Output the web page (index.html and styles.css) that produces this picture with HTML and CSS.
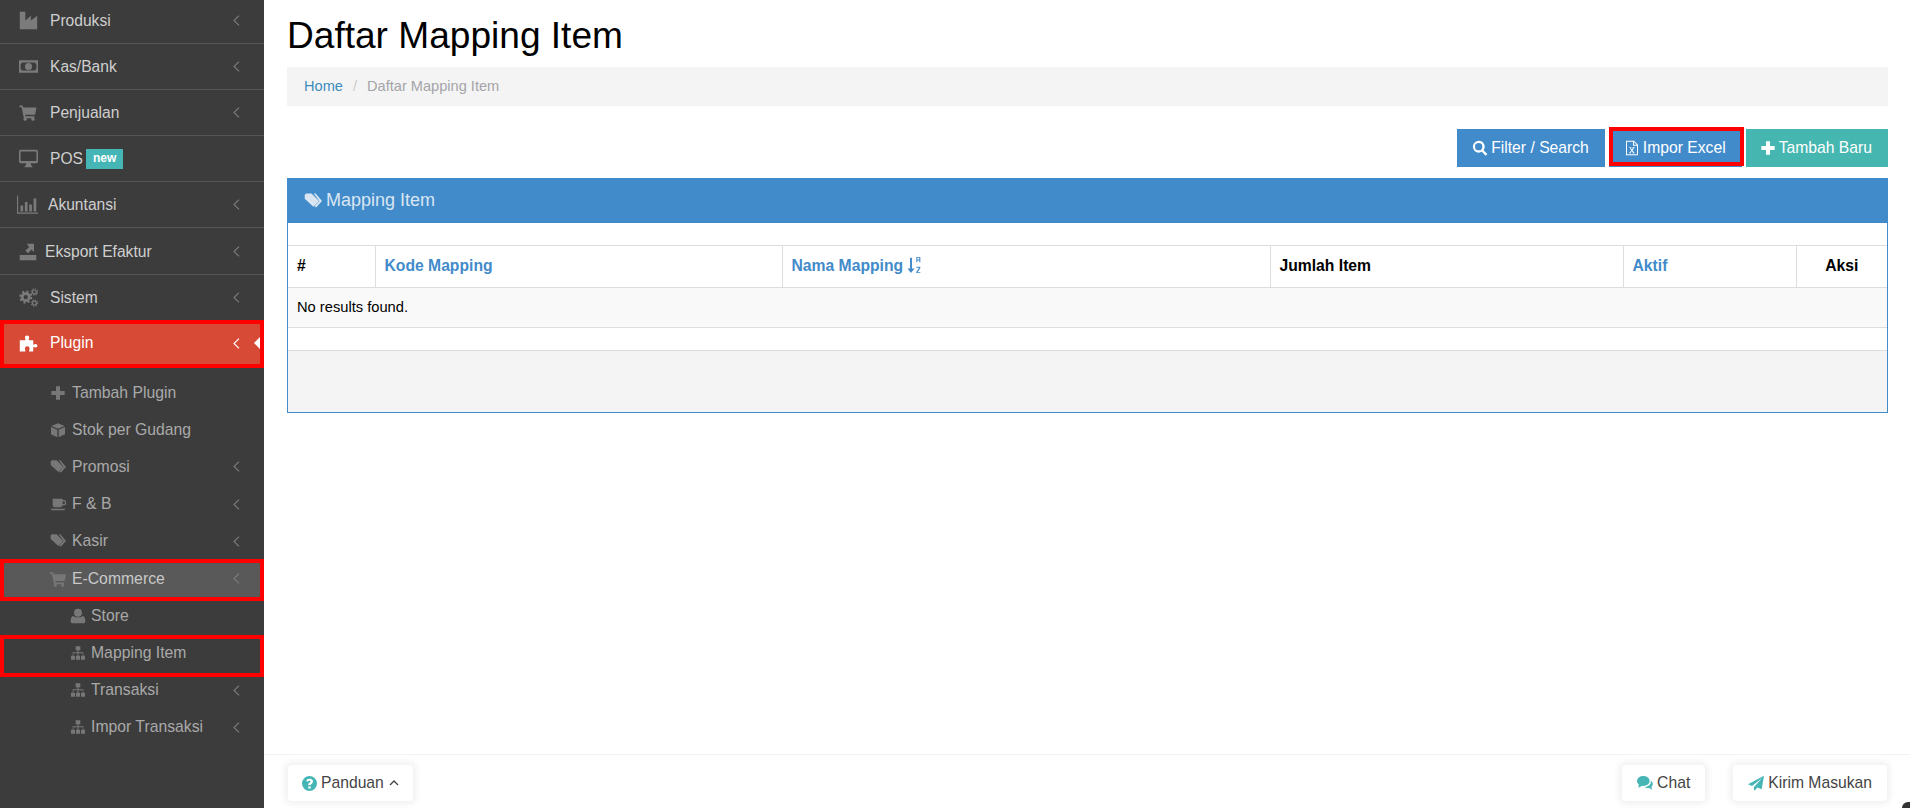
FILE: index.html
```html
<!DOCTYPE html>
<html lang="id">
<head>
<meta charset="utf-8">
<title>Daftar Mapping Item</title>
<link rel="stylesheet" href="styles.css">
</head>
<body>
<svg class="sprite" aria-hidden="true">
  <symbol id="i-industry" viewBox="0 0 24 24"><path d="M1 1h7v11l7-6v6l8-6v17H1z"/></symbol>
  <symbol id="i-money" viewBox="0 0 24 24"><path fill-rule="evenodd" d="M0 4h24v16H0zM4 7 2 9v6l2 2h16l2-2V9l-2-2z"/><circle cx="12" cy="12" r="4.5"/></symbol>
  <symbol id="i-cart" viewBox="0 0 24 24"><path d="M0 2h4.5l.8 3H24l-2 10H8l.5 2.2H21V20H6.2L3 4.500H0z"/><circle cx="8" cy="21.500" r="2.300"/><circle cx="19" cy="21.500" r="2.300"/></symbol>
  <symbol id="i-desktop" viewBox="0 0 24 24"><path fill-rule="evenodd" d="M1.500 1h21l1.500 1.500v14L22.500 18H15v2l2 2v1H7v-1l2-2v-2H1.500L0 16.500v-14zM2 3v12h20V3z"/></symbol>
  <symbol id="i-chart" viewBox="0 0 24 24"><path d="M0 2h1.300v19H24v1.500H0zM4 13h3v7H4zM9 9h3v11H9zM14 12h3v8h-3zM19 5h3v15h-3z"/></symbol>
  <symbol id="i-export" viewBox="0 0 24 24"><path d="M1 16h22v7H1zM20 1v11l-3.500-3.500-4.500 5-3.500-3.500 5-4.500L10.500 1z"/></symbol>
  <symbol id="i-cogs" viewBox="0 0 24 24"><g fill="none" stroke="currentColor"><circle cx="8.500" cy="11.500" r="4.500" stroke-width="3.500"/><circle cx="8.500" cy="11.500" r="7" stroke-width="2.500" stroke-dasharray="2.700 2.800"/><circle cx="19.500" cy="5" r="2.500" stroke-width="1.500"/><circle cx="19.500" cy="5" r="4" stroke-width="1.300" stroke-dasharray="1.500 1.640"/><circle cx="19.500" cy="19" r="2.500" stroke-width="1.500"/><circle cx="19.500" cy="19" r="4" stroke-width="1.300" stroke-dasharray="1.500 1.640"/></g></symbol>
  <symbol id="i-puzzle" viewBox="0 0 24 24"><path d="M1 8h6.500C9 7 7.500 6 7.500 4.500a2.700 2.700 0 0 1 5.400 0c0 1.500-1.500 2.500 0 3.500H18v5c1 1.200 1.500-.4 3-.4a2.300 2.300 0 0 1 0 4.600c-1.500 0-2-1.600-3-.4V22h-5c-1-1 .4-2 .4-3.400a3 3 0 0 0-6 0c0 1.400 1.400 2.400.4 3.400H1z"/></symbol>
  <symbol id="i-plus" viewBox="0 0 24 24"><path d="M9 2h6v7h7v6h-7v7H9v-7H2V9h7z"/></symbol>
  <symbol id="i-cube" viewBox="0 0 24 24"><path d="M12 2 22 6 12 10 2 6zM1.500 7.500 11 11.500V23L1.500 18.500zM22.500 7.500V18.500L13 23V11.500z"/></symbol>
  <symbol id="i-tags" viewBox="0 0 24 24"><path d="M1 3.500 3 2h7l10 10-7.500 7.500L1 9z"/><path d="M13 2h2.500L24 12l-8 8.500-2-2 6.500-6.500z"/></symbol>
  <symbol id="i-coffee" viewBox="0 0 24 24"><path fill-rule="evenodd" d="M4 4h15v2h1.500a3.500 3.500 0 0 1 0 8H19c-.5 2-2 3-4 3H8c-2.500 0-4-1.500-4-4zM19 8v4h1.500a2 2 0 0 0 0-4z"/><path d="M1 19h22l-1.500 2.500h-19z"/></symbol>
  <symbol id="i-user" viewBox="0 0 24 24"><circle cx="12" cy="7" r="6"/><path d="M5 12c2 2.500 12 2.500 14 0 3 .5 4 4 4 7.500 0 2-1 3.500-3 3.500H4c-2 0-3-1.500-3-3.500C1 16 2 12.500 5 12z"/></symbol>
  <symbol id="i-sitemap" viewBox="0 0 24 24"><path d="M8.500 2h7v6h-2.700v3H20v5h2.500v6h-6v-6H19v-3.500h-6.200V16H15v6H9v-6h2.200v-3.500H5V16h2.500v6h-6v-6H4v-5h7.200V8H8.500z"/></symbol>
  <symbol id="i-search" viewBox="0 0 24 24"><path fill-rule="evenodd" d="M10 1a9 9 0 0 1 7.300 14.300L23 21l-2.500 2.500-5.700-5.700A9 9 0 1 1 10 1zm0 3.500a5.500 5.500 0 1 0 0 11 5.500 5.500 0 0 0 0-11z"/></symbol>
  <symbol id="i-excel" viewBox="0 0 24 24"><path fill-rule="evenodd" d="M3 1h12l6 6v16H3zm1.500 1.500v19h15V8.500H13.500v-6zM15 3v4h4z"/><path d="M8 11h3v1h-.8l1.600 2.300L13.500 12h-.8v-1H16v1h-.8l-2.400 3.200L15.500 19h.5v1h-3.200v-1h.8l-1.800-2.600L9.700 19h.8v1H7.500v-1h.7l2.700-3.600L8.700 12H8z"/></symbol>
  <symbol id="i-question" viewBox="0 0 24 24"><path fill-rule="evenodd" d="M12 0a12 12 0 1 1 0 24 12 12 0 0 1 0-24zM12 4.500c-2.500 0-4.200 1.200-5.200 3l2.300 1.700c.6-.9 1.400-1.600 2.700-1.600 1 0 1.800.5 1.800 1.300 0 1.800-3.600 1.700-3.600 5v1h3.800c0-2.200 3.800-2.300 3.800-6 0-2.900-2.600-4.400-4.600-4.400zM10 16.700v3.300h4v-3.300z"/></symbol>
  <symbol id="i-send" viewBox="0 0 24 24"><path d="M24 1 20.500 21.500 14 18.800 10.500 23l-1.500-.2V18L21 5 6 16.500 0 14z"/></symbol>
  <symbol id="i-comments" viewBox="0 0 24 24"><ellipse cx="9.500" cy="9" rx="9.500" ry="7.500"/><path d="M3 13 2 19l6-3z"/><path d="M20.500 8.500C24 10 25 15 21.500 18l1.500 4-5-2.500c-2.500.5-5 0-7-1.500 5 0 11-3.500 9.500-9.500z"/></symbol>
  <symbol id="i-chev" viewBox="0 0 7 11"><path d="M6 .7 1 5.500l5 4.800" fill="none" stroke="currentColor" stroke-width="1.100"/></symbol>
  <symbol id="i-sort" viewBox="0 0 16 20"><path d="M3 2h2.200v12H8l-3.900 5L.2 14H3z"/><path d="M10 1h4.500v6H13.300V5h-2.100v2H10zM11.200 2v2h2.100V2zM10 12h4.500v1.200L11.500 18h3v1H10v-1.200L13 13h-3z"/></symbol>
</svg>

<div class="app">
  <aside class="sidebar">
    <ul class="nav">
      <li class="top"><svg class="ic ic-19"><use href="#i-industry"/></svg><span class="label">Produksi</span><svg class="chev"><use href="#i-chev"/></svg></li>
      <li class="top"><svg class="ic ic-19"><use href="#i-money"/></svg><span class="label">Kas/Bank</span><svg class="chev"><use href="#i-chev"/></svg></li>
      <li class="top"><svg class="ic ic-cart"><use href="#i-cart"/></svg><span class="label">Penjualan</span><svg class="chev"><use href="#i-chev"/></svg></li>
      <li class="top"><svg class="ic ic-19"><use href="#i-desktop"/></svg><span class="label">POS</span><span class="badge">new</span></li>
      <li class="top tight"><svg class="ic ic-21"><use href="#i-chart"/></svg><span class="label">Akuntansi</span><svg class="chev"><use href="#i-chev"/></svg></li>
      <li class="top tall"><svg class="ic ic-18"><use href="#i-export"/></svg><span class="label">Eksport Efaktur</span><svg class="chev"><use href="#i-chev"/></svg></li>
      <li class="top"><svg class="ic ic-19"><use href="#i-cogs"/></svg><span class="label">Sistem</span><svg class="chev"><use href="#i-chev"/></svg></li>
      <li class="top active"><svg class="ic ic-19"><use href="#i-puzzle"/></svg><span class="label">Plugin</span><svg class="chev"><use href="#i-chev"/></svg><span class="notch"></span><span class="mark mark-plugin"></span></li>
    </ul>
    <ul class="sub">
      <li class="lvl2"><svg class="ic"><use href="#i-plus"/></svg><span class="label">Tambah Plugin</span></li>
      <li class="lvl2"><svg class="ic"><use href="#i-cube"/></svg><span class="label">Stok per Gudang</span></li>
      <li class="lvl2"><svg class="ic"><use href="#i-tags"/></svg><span class="label">Promosi</span><svg class="chev"><use href="#i-chev"/></svg></li>
      <li class="lvl2"><svg class="ic"><use href="#i-coffee"/></svg><span class="label">F &amp; B</span><svg class="chev"><use href="#i-chev"/></svg></li>
      <li class="lvl2"><svg class="ic"><use href="#i-tags"/></svg><span class="label">Kasir</span><svg class="chev"><use href="#i-chev"/></svg></li>
      <li class="lvl2 current"><svg class="ic"><use href="#i-cart"/></svg><span class="label">E-Commerce</span><svg class="chev"><use href="#i-chev"/></svg><span class="mark mark-ecom"></span></li>
      <li class="lvl3"><svg class="ic"><use href="#i-user"/></svg><span class="label">Store</span></li>
      <li class="lvl3"><svg class="ic"><use href="#i-sitemap"/></svg><span class="label">Mapping Item</span><span class="mark mark-map"></span></li>
      <li class="lvl3"><svg class="ic"><use href="#i-sitemap"/></svg><span class="label">Transaksi</span><svg class="chev"><use href="#i-chev"/></svg></li>
      <li class="lvl3"><svg class="ic"><use href="#i-sitemap"/></svg><span class="label">Impor Transaksi</span><svg class="chev"><use href="#i-chev"/></svg></li>
    </ul>
  </aside>

  <main class="main">
    <div class="content">
      <h1 class="title">Daftar Mapping Item</h1>
      <nav class="crumb"><a class="crumb-link">Home</a><span class="crumb-sep">/</span><span class="crumb-cur">Daftar Mapping Item</span></nav>
      <div class="actions">
        <button class="btn btn-blue"><svg class="btn-ic"><use href="#i-search"/></svg>Filter / Search</button>
        <button class="btn btn-blue btn-marked"><svg class="btn-ic"><use href="#i-excel"/></svg>Impor Excel<span class="mark mark-btn"></span></button>
        <button class="btn btn-teal"><svg class="btn-ic"><use href="#i-plus"/></svg>Tambah Baru</button>
      </div>
      <section class="panel">
        <header class="panel-head"><svg class="head-ic"><use href="#i-tags"/></svg>Mapping Item</header>
        <div class="gap-top"></div>
        <table class="grid">
          <colgroup><col class="c1"><col class="c2"><col class="c3"><col class="c4"><col class="c5"><col class="c6"></colgroup>
          <thead>
            <tr><th>#</th><th class="link">Kode Mapping</th><th class="link">Nama Mapping <svg class="sort"><use href="#i-sort"/></svg></th><th>Jumlah Item</th><th class="link">Aktif</th><th class="center">Aksi</th></tr>
          </thead>
          <tbody>
            <tr><td colspan="6">No results found.</td></tr>
          </tbody>
        </table>
        <div class="gap-bottom"></div>
        <div class="panel-foot"></div>
      </section>
    </div>
    <footer class="foot">
      <button class="fbtn"><svg class="f-ic"><use href="#i-question"/></svg>Panduan<svg class="caret" viewBox="0 0 10 6"><path d="M1 5l4-4 4 4" fill="none" stroke="currentColor" stroke-width="1.300"/></svg></button>
      <div class="foot-right">
        <button class="fbtn fbtn-chat"><svg class="f-ic f-ic-wide"><use href="#i-comments"/></svg>Chat</button>
        <button class="fbtn fbtn-send"><svg class="f-ic f-ic-wide"><use href="#i-send"/></svg>Kirim Masukan</button>
      </div>
    </footer>
    <span class="corner"></span>
  </main>
</div>
</body>
</html>
```

FILE: styles.css
```css
* { box-sizing: border-box; }
html, body { margin: 0; height: 808px; overflow: hidden; background: #fff; }
body { font-family: "Liberation Sans", Arial, sans-serif; color: #000; }
ul { list-style: none; margin: 0; padding: 0; }
.sprite { display: none; }
svg { fill: currentColor; flex: none; }

.app { display: flex; height: 808px; }

/* sidebar */
.sidebar { width: 264px; flex: none; background: #3c3c3c; overflow: hidden; font-size: 15.6px; }
.nav { margin-top: -2px; }
.top { position: relative; display: flex; align-items: center; height: 46px; padding-left: 19px; padding-right: 24px; border-bottom: 1px solid #555; color: #cfcfcf; }
.top.tall { height: 47px; padding-top: 1px; }
.top.tight { padding-left: 17px; }
.top.tight .ic { margin-right: 10px; }
.top.tall .ic { margin-right: 8px; }
.top .ic { color: #7b7b7b; }
.ic { width: 16px; height: 16px; margin-right: 6px; color: #777; }
.ic-19 { width: 19px; height: 19px; margin-right: 12px; }
.ic-cart { width: 18px; height: 17px; margin-right: 13px; }
.ic-21 { width: 21px; height: 21px; }
.ic-18 { width: 18px; height: 18px; }
.label { white-space: nowrap; }
.chev { width: 7px; height: 11px; margin-left: auto; color: #7b7b7b; }
.badge { margin-left: 3px; background: #45b6b5; color: #fff; font-size: 12px; font-weight: 700; padding: 0 7px; height: 20px; line-height: 18px; }
.active { height: 46px; padding-bottom: 2px; background: #d64a36; color: #fff; border-bottom: 0; }
.top.active .ic, .active .chev { color: #fff; }
.notch { position: absolute; right: 4px; top: 16px; width: 0; height: 0; border: 6px solid transparent; border-left: 0; border-right: 6px solid #fff; }

.sub { padding-top: 7px; color: #a9a9a9; font-size: 15.75px; }
.sub li { position: relative; display: flex; align-items: center; height: 37.2px; padding-right: 24px; }
.lvl2 { padding-left: 50px; }
.lvl3 { padding-left: 70px; }
.lvl3 .ic { margin-right: 5px; }
.current { background: #595959; color: #c8c8c8; }

.mark { position: absolute; border: 4px solid #f00; pointer-events: none; }
.mark-plugin { left: 0; right: 0; top: -1px; bottom: -1px; }
.mark-ecom { left: 0; right: 0; top: -1px; height: 42px; }
.mark-map { left: 0; right: 0; top: 1px; height: 42px; }
.mark-btn { left: 0; right: -2px; top: -2px; bottom: 1px; }

/* main */
.main { position: relative; flex: 1; min-width: 0; display: flex; flex-direction: column; }
.content { flex: 1; padding: 0 22px 0 23px; }
.title { margin: 0; padding-top: 14px; height: 67px; font-size: 37.1px; line-height: 42px; font-weight: 400; }
.crumb { display: flex; align-items: center; height: 39px; padding-left: 17px; padding-bottom: 2px; background: #f4f4f4; font-size: 14.6px; color: #a4a4a9; }
.crumb-link { color: #3c8dbc; }
.crumb-sep { margin: 0 10px; color: #ccc; }
.actions { display: flex; justify-content: flex-end; gap: 4px; margin-top: 23px; }
.btn { position: relative; display: flex; align-items: center; height: 38px; padding: 0 16px 0 14px; border: 0; color: #fff; font: 15.7px "Liberation Sans", Arial, sans-serif; }
.btn-blue { background: #428bca; padding-left: 15px; }
.btn-teal { background: #45b6b0; }
.btn-ic { width: 16px; height: 16px; margin-right: 3px; }

.panel { margin-top: 11px; border: 1px solid #428bca; border-top: 0; }
.panel-head { display: flex; align-items: center; height: 45px; margin: 0 -1px; padding-left: 17px; background: #428bca; color: #d9e6f2; font-size: 18px; }
.head-ic { width: 18px; height: 18px; margin-right: 4px; }
.gap-top { height: 22px; }
.grid { width: 100%; table-layout: fixed; border-collapse: collapse; font-size: 15.7px; }
.c1 { width: 87px; } .c2 { width: 407px; } .c3 { width: 488px; } .c4 { width: 353px; } .c5 { width: 173px; }
.grid th { height: 42px; padding: 0 9px 2px; text-align: left; font-weight: 700; border: 1px solid #ddd; border-left: 0; }
.grid th:last-child { border-right: 0; }
.grid th.link { color: #428bca; }
.grid th.center { text-align: center; }
.grid td { height: 40px; padding: 0 9px 2px; background: #f9f9f9; border-bottom: 1px solid #ddd; font-size: 14.7px; }
.sort { width: 15px; height: 18px; vertical-align: -3px; }
.gap-bottom { height: 23px; border-bottom: 1px solid #ddd; }
.panel-foot { height: 61px; background: #f4f4f4; }

.foot { display: flex; justify-content: space-between; height: 54px; padding: 10px 23px 0 24px; border-top: 1px solid #f2f2f2; }
.foot-right { display: flex; gap: 28px; }
.fbtn { display: flex; align-items: center; height: 36px; padding: 0 14px; background: #fff; border: 0; border-radius: 4px; box-shadow: 0 0 7px 3px #f0f0f0; color: #444; font: 15.7px "Liberation Sans", Arial, sans-serif; }
.fbtn-chat { padding: 0 15px; }
.fbtn-send { padding: 0 15px; }
.f-ic { width: 15px; height: 15px; margin-right: 4px; color: #45b6b5; }
.f-ic-wide { width: 16px; height: 16px; }
.caret { width: 10px; height: 6px; margin-left: 5px; color: #444; }
.corner { position: absolute; right: 0; bottom: 0; width: 8px; height: 6px; background: #333; border-radius: 8px 0 0 0; }
```
